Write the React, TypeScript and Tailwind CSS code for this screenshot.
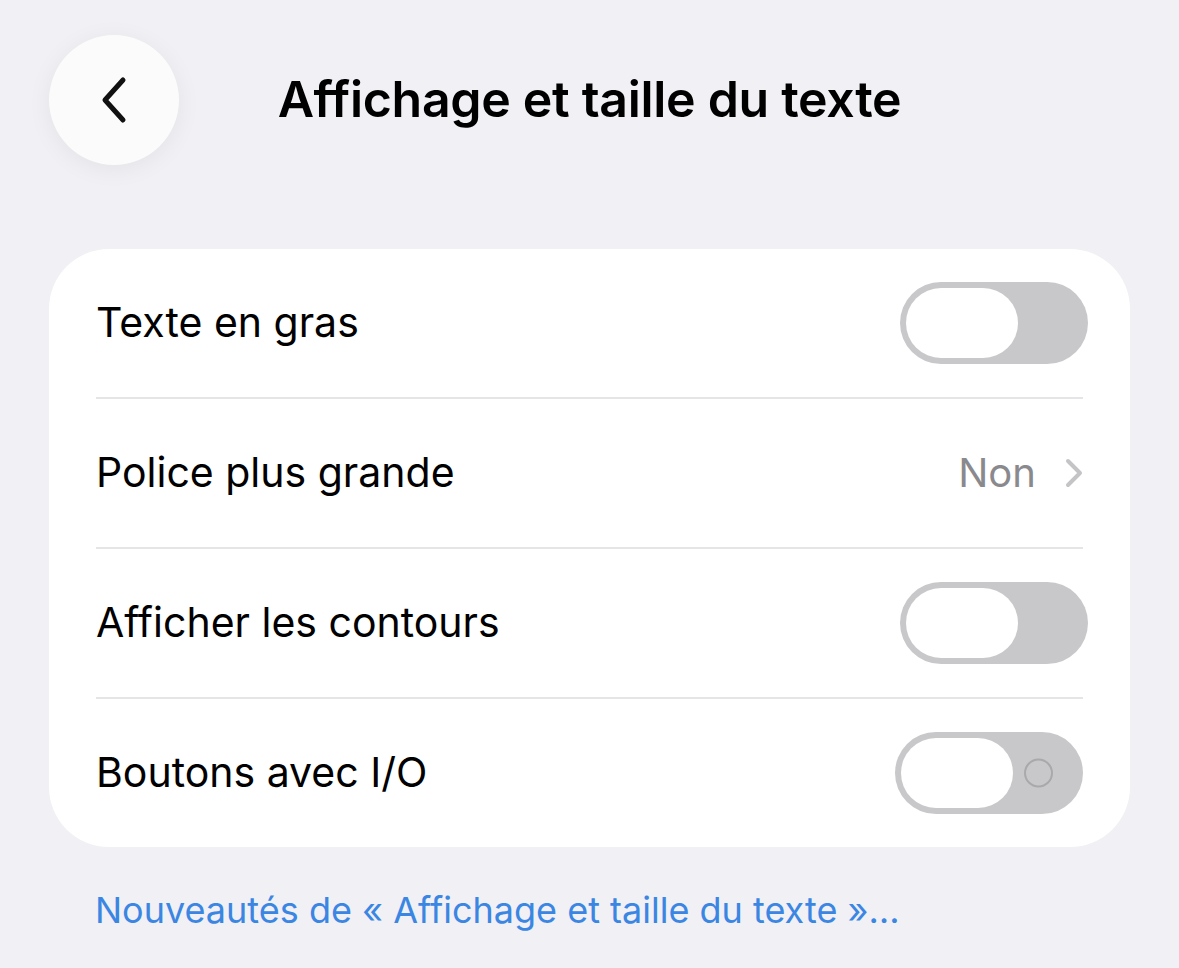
import React, { useState } from 'react'

interface ToggleProps {
  withIcon?: boolean;
  className?: string;
}

const Toggle: React.FC<ToggleProps> = ({ withIcon, className }: ToggleProps) => {
  const [on, setOn] = useState(false)
  return (
    <button
      type="button"
      onClick={() => setOn(!on)}
      className={`relative flex h-[82px] w-[188px] items-center rounded-full p-[6px] ${on ? 'bg-[#34c759] justify-end' : 'bg-[#c8c8ca] justify-start'} ${className ?? ''}`}
    >
      <span className="block h-[70px] w-[112px] rounded-full bg-white" />
      {withIcon && !on && (
        <span className="absolute right-[30px] top-1/2 h-[29px] w-[29px] -translate-y-1/2 rounded-full border-[2.5px] border-[#a9a9ab]" />
      )}
    </button>
  )
}

const Row: React.FC<{ label: string; children: React.ReactNode; last?: boolean }> = ({ label, children, last }) => (
  <div className="pl-[47px] pr-[47px]">
    <div className={`flex items-center justify-between ${last ? 'h-[148px]' : 'h-[150px] border-b-[2px] border-[#e5e5e7]'}`}>
      <span className="text-[41px] text-black">{label}</span>
      {children}
    </div>
  </div>
)

export default function App() {
  return (
    <div className="h-[968px] w-[1179px] overflow-hidden bg-[#f0f0f5]" style={{ fontFamily: 'Inter, "Noto Sans", sans-serif' }}>
      <div className="relative flex h-[200px] items-center justify-center">
        <button className="absolute left-[49px] top-[35px] flex h-[130px] w-[130px] items-center justify-center rounded-full bg-[#fbfbfc] shadow-[0_4px_24px_rgba(0,0,0,0.06)]">
          <svg width="34" height="50" viewBox="0 0 34 50" fill="none">
            <path d="M26 5 L8 25 L26 45" stroke="#111" strokeWidth="5" strokeLinecap="round" strokeLinejoin="round" />
          </svg>
        </button>
        <h1 className="-mt-[2px] text-[50px] font-semibold tracking-[-0.3px] text-black">Affichage et taille du texte</h1>
      </div>

      <div className="mx-[49px] mt-[49px] overflow-hidden rounded-[60px] bg-white">
        <Row label="Texte en gras">
          <Toggle className="mr-[-5px]" />
        </Row>
        <Row label="Police plus grande">
          <div className="flex items-center gap-[29px]">
            <span className="text-[40px] text-[#8a8a8e]">Non</span>
            <svg width="18" height="30" viewBox="0 0 18 30" fill="none">
              <path d="M3 3 L15 15 L3 27" stroke="#c4c4c7" strokeWidth="4" strokeLinecap="round" strokeLinejoin="round" />
            </svg>
          </div>
        </Row>
        <Row label="Afficher les contours">
          <Toggle className="mr-[-5px]" />
        </Row>
        <Row label="Boutons avec I/O" last>
          <Toggle withIcon />
        </Row>
      </div>

      <p className="ml-[95px] mt-[36px] text-[36px] text-[#3a86e2]">Nouveautés de « Affichage et taille du texte »…</p>
    </div>
  )
}
